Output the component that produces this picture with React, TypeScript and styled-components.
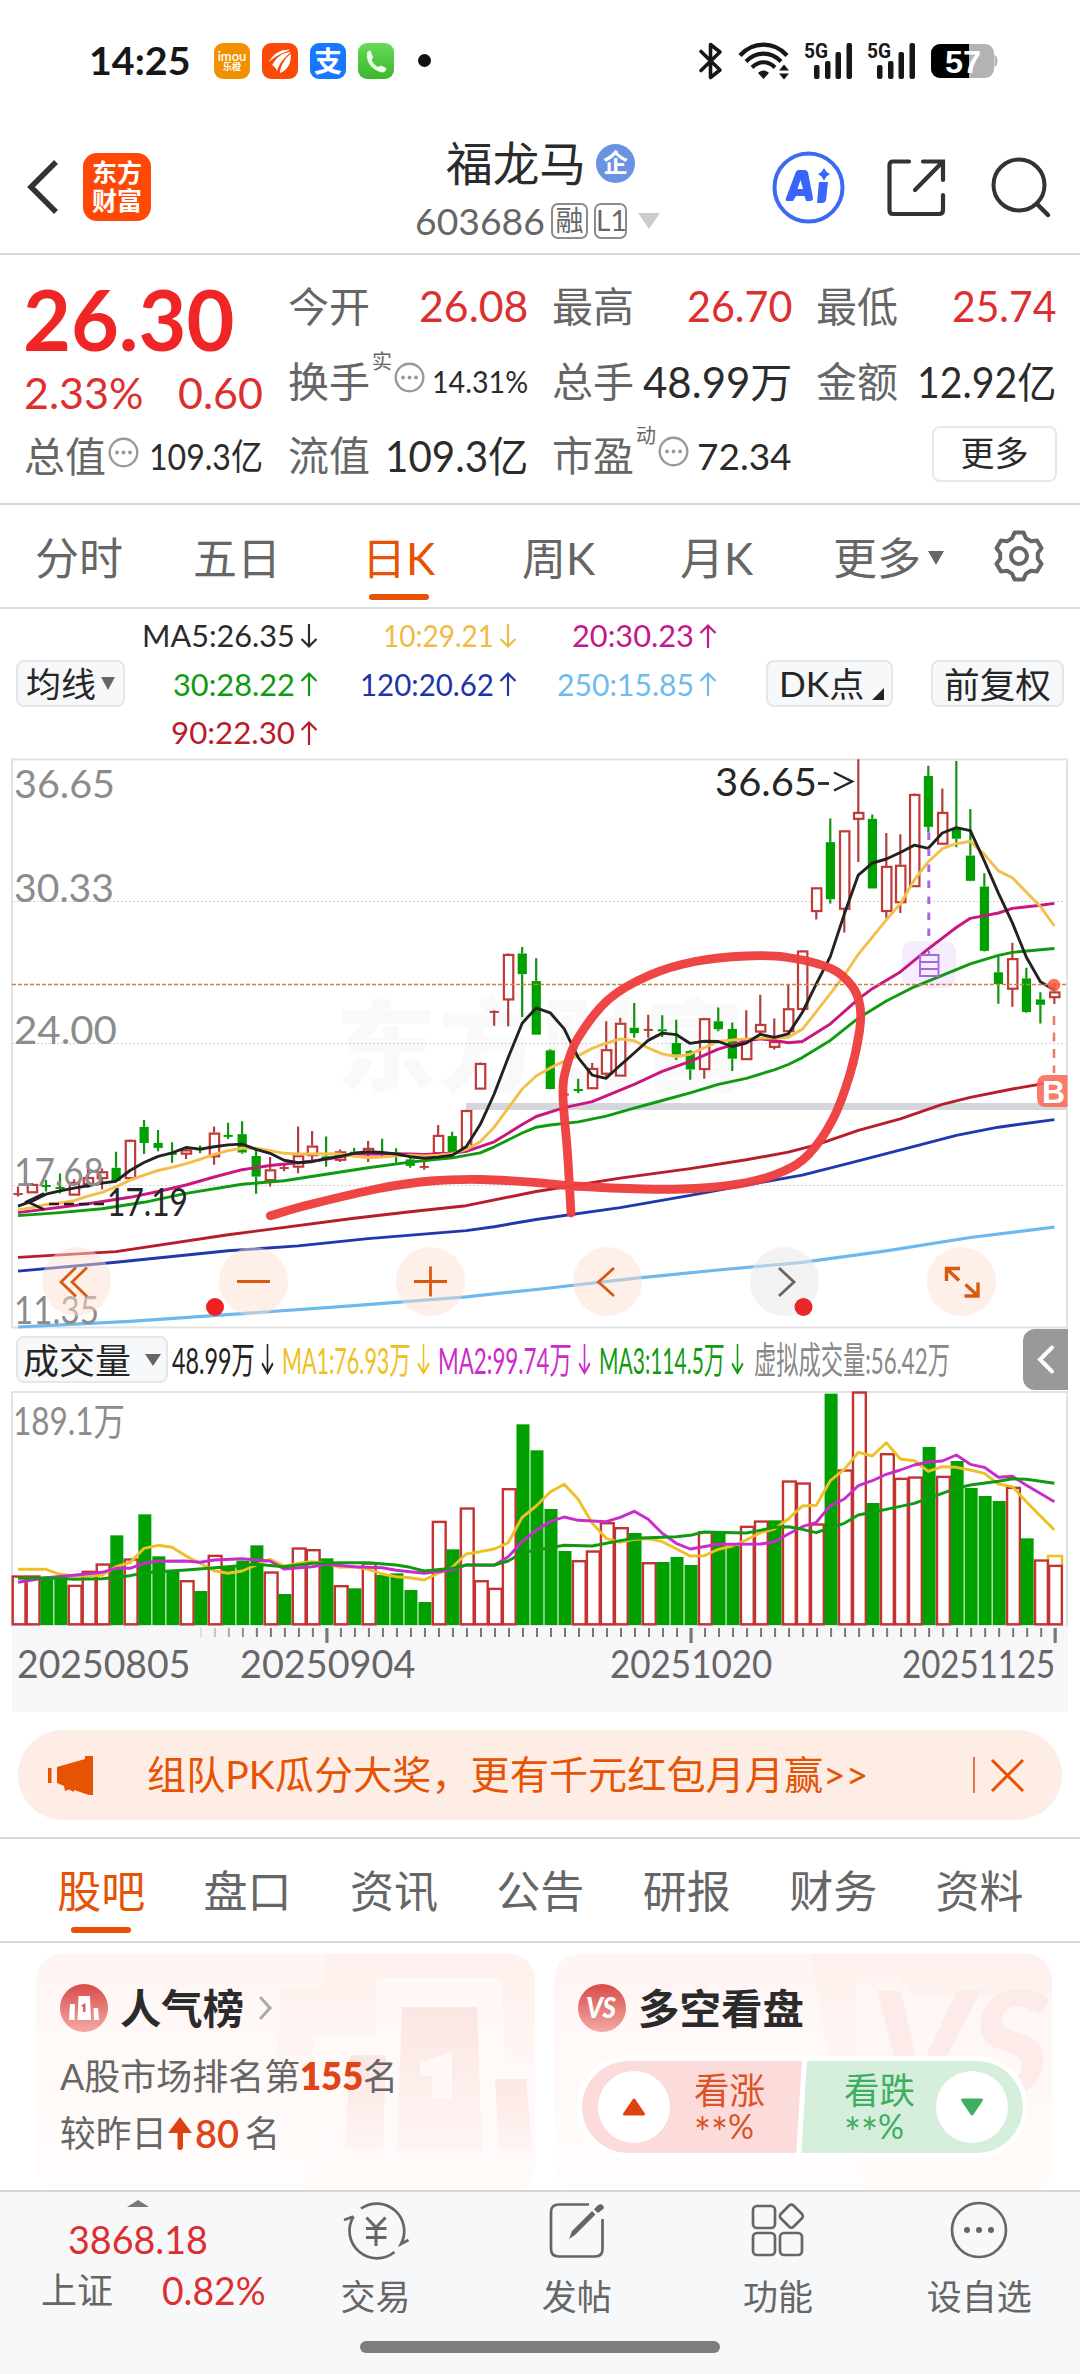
import React, { useLayoutEffect, useRef, useState } from 'react';
import styled, { createGlobalStyle } from 'styled-components';

const FONT = `Lato, "Noto Sans CJK SC", sans-serif`;
const ORANGE = '#e65305';
const RED = '#dc2f2f';
const GREEN = '#00a000';

const Global = createGlobalStyle`
  * { box-sizing: border-box; }
  body { margin: 0; background: #fff; font-family: ${FONT}; color: #2b2b2b; }
  svg { display: block; flex: none; overflow: visible; }
`;

/* ---------- text squeezed or stretched to an exact width ---------- */
const FitBox = styled.span<{ $w: number; $size: number; $color?: string; $weight?: number; $lh?: number }>`
  display: block;
  flex: none;
  width: ${p => p.$w}px;
  font-size: ${p => p.$size}px;
  line-height: ${p => p.$lh ?? Math.round(p.$size * 1.2)}px;
  font-weight: ${p => p.$weight ?? 400};
  color: ${p => p.$color ?? 'inherit'};
  white-space: nowrap;
`;
const FitInner = styled.span`
  display: inline-block;
  transform-origin: left center;
`;
type FitProps = { w: number; size: number; color?: string; weight?: number; lh?: number; children: React.ReactNode };
function Fit({ w, size, color, weight, lh, children }: FitProps) {
  const ref = useRef<HTMLSpanElement>(null);
  const [k, setK] = useState(1);
  useLayoutEffect(() => {
    if (ref.current) setK(w / ref.current.offsetWidth);
  }, [w, size]);
  return (
    <FitBox $w={w} $size={size} $color={color} $weight={weight} $lh={lh}>
      <FitInner ref={ref} style={{ transform: `scaleX(${k})` }}>{children}</FitInner>
    </FitBox>
  );
}

const Page = styled.div`
  width: 1080px;
  height: 2374px;
  display: flex;
  flex-direction: column;
  overflow: hidden;
  background: #fff;
`;

/* ---------- status bar ---------- */
const StatusBar = styled.div`
  height: 122px;
  flex: none;
  display: flex;
  align-items: center;
  padding: 0 82px 1px 89px;
`;
const AppBadges = styled.div`
  display: flex;
  align-items: center;
  gap: 12px;
  margin-left: 23px;
`;
const AppBadge = styled.div<{ $bg: string }>`
  width: 36px;
  height: 36px;
  border-radius: 9px;
  background: ${p => p.$bg};
  color: #fff;
  display: flex;
  flex-direction: column;
  align-items: center;
  justify-content: center;
  font-size: 28px;
  line-height: 30px;
  font-weight: 700;
`;
const BadgeLatin = styled.span`font-size: 13px; line-height: 12px; font-weight: 600;`;
const BadgeHan = styled.span`font-size: 9px; line-height: 10px;`;
const Dot = styled.span`
  width: 13px;
  height: 13px;
  border-radius: 50%;
  background: #111;
  margin-left: 24px;
`;
const StatusIcons = styled.div`
  margin-left: auto;
  display: flex;
  align-items: center;
`;

const Signal = () => (
  <svg width="50" height="40" viewBox="0 0 50 40" fill="#171717">
    <text x="-1" y="17" fontFamily="Roboto" fontWeight="700" fontSize="21" textLength="24" lengthAdjust="spacingAndGlyphs">5G</text>
    <rect x="9" y="24" width="5.500" height="14" rx="2" />
    <rect x="20" y="20" width="5.500" height="18" rx="2" />
    <rect x="30.500" y="11" width="5.500" height="27" rx="2" />
    <rect x="41.500" y="2" width="5.500" height="36" rx="2" />
  </svg>
);

function Status() {
  return (
    <StatusBar>
      <Fit w={102} size={39} weight={700} color="#171717">14:25</Fit>
      <AppBadges>
        <AppBadge $bg="#f29100"><BadgeLatin>imou</BadgeLatin><BadgeHan>乐橙</BadgeHan></AppBadge>
        <AppBadge $bg="#fc4a06">
          <svg width="36" height="36" viewBox="0 0 36 36" fill="#fff">
            <path d="M7 19C11 11 19 6 28 7C20 10 12 14 7 19Z" />
            <path d="M10 22C15 14 21 9 29 9C24 13 17 20 15 28C14 25 12 23 10 22Z" />
            <path d="M18 28C20 20 24 14 29 11C29 20 26 27 18 30Z" />
          </svg>
        </AppBadge>
        <AppBadge $bg="#1677ff">支</AppBadge>
        <AppBadge $bg="linear-gradient(#66d95a,#3db62c)">
          <svg width="36" height="36" viewBox="0 0 36 36">
            <path d="M9 9.500Q12 6 13 9L15 14Q15 15.500 13.500 16.500Q15 21 20 24L22.500 22.500Q28 24 28.500 26Q27 30.500 22 29Q11 25 9 15Z" fill="#eafbe6" />
          </svg>
        </AppBadge>
      </AppBadges>
      <Dot />
      <StatusIcons>
        <svg width="26" height="40" viewBox="0 0 26 40" fill="none" stroke="#171717" strokeWidth="3.600" strokeLinejoin="round" strokeLinecap="round">
          <path d="M3 10.500L22 29L12.500 36.500V3.500L22 11L3 29.500" />
        </svg>
        <svg width="56" height="40" viewBox="0 0 56 40" style={{ marginLeft: 15 }} fill="none" stroke="#171717" strokeWidth="4.200">
          <path d="M1 14.500C14 0 35 0 48 14.500" />
          <path d="M7 20.500C17 10 32 10 42 20.500" />
          <path d="M13 26.500C20 19.500 29 19.500 36 26.500" />
          <path d="M19 32C22 28.500 27 28.500 30 32L24.500 38Z" fill="#171717" stroke="none" />
          <path d="M40 29.500H50L45 23.500ZM40 32.500H50L45 38.500Z" fill="#171717" stroke="none" />
        </svg>
        <svg width="10" height="4" />
        <Signal />
        <svg width="13" height="4" />
        <Signal />
        <svg width="13" height="4" />
        <svg width="67" height="36" viewBox="0 0 67 36">
          <clipPath id="cell"><rect x="0" y="1" width="63" height="34" rx="9" /></clipPath>
          <g clipPath="url(#cell)">
            <rect width="63" height="36" fill="#b3b3b3" />
            <rect width="38" height="36" fill="#000" />
          </g>
          <path d="M63.500 12C67.500 13 67.500 23 63.500 24Z" fill="#b3b3b3" />
          <text x="14" y="30" fontFamily="Liberation Sans" fontWeight="700" fontSize="32" fill="#fff" textLength="36" lengthAdjust="spacingAndGlyphs">57</text>
        </svg>
      </StatusIcons>
    </StatusBar>
  );
}

/* ---------- header ---------- */
const Header = styled.header`
  height: 133px;
  flex: none;
  display: grid;
  grid-template-columns: 300px 1fr 350px;
  border-bottom: 2px solid #d9d9d9;
`;
const HeaderLeft = styled.div`
  display: flex;
  align-items: center;
  padding: 0 0 1px 26px;
  gap: 24px;
`;
const Logo = styled.div`
  width: 68px;
  height: 68px;
  border-radius: 14px;
  background: #ff4805;
  color: #fff;
  font-size: 25px;
  line-height: 28px;
  font-weight: 700;
  text-align: center;
  padding-top: 5px;
`;
const HeaderMid = styled.div`
  padding-left: 115px;
  display: flex;
  flex-direction: column;
`;
const NameRow = styled.div`
  display: flex;
  align-items: center;
  height: 56px;
  margin: 13px 0 0 31px;
  gap: 10px;
`;
const FirmBadge = styled.div`
  width: 39px;
  height: 39px;
  border-radius: 50%;
  background: #6b93e4;
  color: #fff;
  font-size: 25px;
  line-height: 36px;
  font-weight: 700;
  text-align: center;
`;
const CodeRow = styled.div`
  display: flex;
  align-items: center;
  height: 40px;
  margin-top: 10px;
  gap: 6px;
`;
const Tag = styled.span<{ $w: number }>`
  width: ${p => p.$w}px;
  height: 36px;
  border: 2px solid #8c8c8c;
  border-radius: 7px;
  color: #666;
  font-size: 28px;
  line-height: 31px;
  text-align: center;
`;
const HeaderRight = styled.div`
  display: flex;
  align-items: center;
  padding-left: 42px;
`;
const Triangle = styled.span<{ $w: number; $h: number; $color: string; $up?: boolean }>`
  flex: none;
  border-left: ${p => p.$w / 2}px solid transparent;
  border-right: ${p => p.$w / 2}px solid transparent;
  ${p => (p.$up ? 'border-bottom' : 'border-top')}: ${p => p.$h}px solid ${p => p.$color};
`;
const TagArrow = styled(Triangle)`margin-left: 5px;`;

function TopHeader() {
  return (
    <Header>
      <HeaderLeft>
        <svg width="33" height="56" viewBox="0 0 33 56" fill="none" stroke="#333" strokeWidth="5.500">
          <path d="M30 3L5 28L30 53" />
        </svg>
        <Logo>东方<br />财富</Logo>
      </HeaderLeft>
      <HeaderMid>
        <NameRow>
          <Fit w={140} size={47}>福龙马</Fit>
          <FirmBadge>企</FirmBadge>
        </NameRow>
        <CodeRow>
          <Fit w={130} size={37} color="#666">603686</Fit>
          <Tag $w={37}>融</Tag>
          <Tag $w={33}>L1</Tag>
          <TagArrow $w={23} $h={16} $color="#ccc" />
        </CodeRow>
      </HeaderMid>
      <HeaderRight>
        <svg width="73" height="73" viewBox="0 0 73 73">
          <circle cx="36.500" cy="36.500" r="34" fill="none" stroke="#3d6bf0" strokeWidth="4" />
          <g fill="#3865fb">
            <path d="M24 20.500Q25 19 27 19H33Q35.500 19 36 21.500L41 47Q41 50 38 50H34L32.500 45H24L21 50H15Q13 49.500 14 47ZM28.500 29L25.500 38H31Z" fillRule="evenodd" />
            <path d="M47 31H56L54 49Q53 52 50 52H45Z" />
            <path d="M52 17L54.500 21L58 23L54.500 25.500L52 29.500L49.500 25.500L46 23L49.500 21Z" />
          </g>
        </svg>
        <svg width="58" height="58" viewBox="0 0 58 58" style={{ marginLeft: 42 }} fill="none" stroke="#333" strokeWidth="4.200" strokeLinecap="round">
          <path d="M22 2.500H6Q2.500 2.500 2.500 6V51Q2.500 55 6 55H52Q56 55 56 51V36M36 2.500H56V21M55 3.500L28 31" />
        </svg>
        <svg width="60" height="60" viewBox="0 0 60 60" style={{ marginLeft: 46 }} fill="none" stroke="#333" strokeWidth="4" strokeLinecap="round">
          <circle cx="28" cy="27" r="25.500" />
          <path d="M46 46L57 57" strokeWidth="4.500" />
        </svg>
      </HeaderRight>
    </Header>
  );
}

/* ---------- quote ---------- */
const Quote = styled.section`
  height: 250px;
  flex: none;
  display: grid;
  grid-template-columns: 239px 767px;
  column-gap: 25px;
  padding-left: 24px;
  border-bottom: 2px solid #d9d9d9;
`;
const QuoteLeft = styled.div`
  padding-top: 31px;
  display: flex;
  flex-direction: column;
`;
const Line = styled.div<{ $h: number }>`
  height: ${p => p.$h}px;
  flex: none;
  display: flex;
  align-items: center;
  justify-content: space-between;
`;
const BigPrice = styled(Line)`
  margin: 0 0 1px -1px;
`;
const QuoteGrid = styled.div`
  display: grid;
  grid-template-columns: 240px 240px 240px;
  grid-template-rows: 72px 79px 69px;
  column-gap: 24px;
  padding-top: 15px;
`;
const Cell = styled.div`
  display: flex;
  align-items: center;
  justify-content: space-between;
`;
const LabelGroup = styled.div`
  display: flex;
  align-items: center;
  gap: 2px;
`;
const Sup = styled.span`
  font-size: 20px;
  line-height: 20px;
  color: #666;
  align-self: flex-start;
  margin-top: -6px;
`;
const MoreButton = styled.div`
  margin: 0 -1px 3px auto;
  width: 125px;
  height: 56px;
  border: 2px solid #e6e9ea;
  border-radius: 8px;
  display: flex;
  align-items: center;
  justify-content: center;
  font-size: 34px;
  line-height: 40px;
  padding-bottom: 3px;
`;

const Ellipsis = () => (
  <svg width="31" height="31" viewBox="0 0 31 31">
    <circle cx="15.500" cy="15.500" r="13.800" fill="none" stroke="#999" strokeWidth="2.400" />
    <g fill="#999"><circle cx="9" cy="15.500" r="1.900" /><circle cx="15.500" cy="15.500" r="1.900" /><circle cx="22" cy="15.500" r="1.900" /></g>
  </svg>
);
const EllipsisLift = styled.span`
  margin-top: -8px;
`;

const Label = ({ children }: { children: string }) => <Fit w={82} size={41} color="#666">{children}</Fit>;

function QuotePanel() {
  return (
    <Quote>
      <QuoteLeft>
        <BigPrice $h={64}><Fit w={211} size={85} weight={700} color="#f02525" lh={64}>26.30</Fit></BigPrice>
        <Line $h={84}>
          <Fit w={119} size={43} color={RED}>2.33%</Fit>
          <Fit w={85} size={43} color={RED}>0.60</Fit>
        </Line>
        <Line $h={42}>
          <LabelGroup><Label>总值</Label><EllipsisLift><Ellipsis /></EllipsisLift></LabelGroup>
          <Fit w={114} size={36}>109.3亿</Fit>
        </Line>
      </QuoteLeft>
      <QuoteGrid>
        <Cell><Label>今开</Label><Fit w={109} size={42} color={RED}>26.08</Fit></Cell>
        <Cell><Label>最高</Label><Fit w={105} size={42} color={RED}>26.70</Fit></Cell>
        <Cell><Label>最低</Label><Fit w={104} size={42} color={RED}>25.74</Fit></Cell>
        <Cell>
          <LabelGroup><Label>换手</Label><Sup>实</Sup><EllipsisLift><Ellipsis /></EllipsisLift></LabelGroup>
          <Fit w={96} size={31}>14.31%</Fit>
        </Cell>
        <Cell><Label>总手</Label><Fit w={149} size={42}>48.99万</Fit></Cell>
        <Cell><Label>金额</Label><Fit w={139} size={42}>12.92亿</Fit></Cell>
        <Cell><Label>流值</Label><Fit w={143} size={42}>109.3亿</Fit></Cell>
        <Cell>
          <LabelGroup><Label>市盈</Label><Sup>动</Sup><EllipsisLift><Ellipsis /></EllipsisLift></LabelGroup>
          <Fit w={95} size={37}>72.34</Fit>
        </Cell>
        <Cell><MoreButton>更多</MoreButton></Cell>
      </QuoteGrid>
    </Quote>
  );
}

/* ---------- period tabs ---------- */
const Periods = styled.nav`
  height: 104px;
  flex: none;
  display: grid;
  grid-template-columns: 158px 158px 165px 155px 161px 185px 98px;
  border-bottom: 2px solid #dcdcdc;
`;
const Tab = styled.div<{ $on?: boolean }>`
  display: flex;
  flex-direction: column;
  align-items: center;
  padding-top: 27px;
  font-size: 44px;
  line-height: 52px;
  color: ${p => (p.$on ? ORANGE : '#666')};
`;
const Underline = styled.span`
  width: 60px;
  height: 6px;
  border-radius: 3px;
  background: ${ORANGE};
  margin-top: 10px;
`;
const MoreTab = styled(Tab)`
  flex-direction: row;
  align-items: flex-start;
  padding-left: 36px;
  gap: 7px;
`;
const Nudge = styled.span<{ $y: number }>`
  display: flex;
  margin-top: ${p => p.$y}px;
`;
const GearTab = styled.div`
  padding: 25px 0 0 11px;
`;

function gearPath() {
  const pts: string[] = [];
  const teeth = 6;
  for (let i = 0; i < teeth; i++) {
    const a = (i / teeth) * Math.PI * 2 - Math.PI / 2;
    [[-0.37, 19], [-0.19, 23.8], [0.19, 23.8], [0.37, 19]].forEach(([d, r]) => {
      pts.push(`${(26 + Math.cos(a + d) * r).toFixed(1)} ${(26 + Math.sin(a + d) * r).toFixed(1)}`);
    });
  }
  return `M${pts.join('L')}Z`;
}

function PeriodTabs() {
  return (
    <Periods>
      <Tab>分时</Tab>
      <Tab>五日</Tab>
      <Tab $on>日K<Underline /></Tab>
      <Tab>周K</Tab>
      <Tab>月K</Tab>
      <MoreTab>更多<Nudge $y={19}><Triangle $w={16} $h={14} $color="#666" /></Nudge></MoreTab>
      <GearTab>
        <svg width="52" height="52" viewBox="0 0 52 52" fill="none" stroke="#666" strokeWidth="4" strokeLinejoin="round">
          <path d={gearPath()} />
          <circle cx="26" cy="26" r="8" />
        </svg>
      </GearTab>
    </Periods>
  );
}

/* ---------- indicators ---------- */
const Indicators = styled.section`
  height: 149px;
  flex: none;
  display: flex;
  align-items: center;
  padding: 0 16px;
`;
const Chip = styled.div<{ $w: number; $h?: number }>`
  flex: none;
  width: ${p => p.$w}px;
  height: ${p => p.$h ?? 47}px;
  border: 2px solid #e3e7eb;
  border-radius: 8px;
  background: #f7f8fa;
  display: flex;
  align-items: center;
  justify-content: center;
  gap: 5px;
  color: #262626;
`;
const CornerMark = styled.span`
  align-self: flex-end;
  margin: 0 -3px 5px 3px;
  border-bottom: 12px solid #222;
  border-left: 12px solid transparent;
`;
const MaGrid = styled.div`
  display: grid;
  grid-template-columns: 193px 199px 200px;
  grid-auto-rows: 48.500px;
  justify-items: end;
  align-items: center;
  width: 592px;
  margin: 1px 49px 0 0;
`;
const MaItem = styled.div<{ $color: string }>`
  color: ${p => p.$color};
  display: flex;
  align-items: center;
  gap: 5px;
`;
const Spacer = styled.div`flex: 1;`;

const Arrow = ({ color, up, w = 18, h = 24 }: { color: string; up?: boolean; w?: number; h?: number }) => (
  <svg width={w} height={h} viewBox="0 0 18 24" preserveAspectRatio="none" fill="none" stroke={color} strokeWidth="2.200">
    <path d={up ? 'M9 24V1.500M1.500 9L9 1.500L16.500 9' : 'M9 0V22.500M1.500 15L9 22.500L16.500 15'} />
  </svg>
);

const MAS: [string, number, string, boolean][] = [
  ['MA5:26.35', 153, '#2b2b2b', false],
  ['10:29.21', 111, '#efba45', false],
  ['20:30.23', 122, '#c5168c', true],
  ['30:28.22', 122, '#109a10', true],
  ['120:20.62', 134, '#2034a8', true],
  ['250:15.85', 137, '#6fbcec', true],
  ['90:22.30', 124, '#b81c28', true],
];

function IndicatorBar() {
  return (
    <Indicators>
      <Chip $w={109}><Fit w={70} size={34}>均线</Fit><Triangle $w={15} $h={13} $color="#666" /></Chip>
      <MaGrid>
        {MAS.map(([t, w, c, up]) => (
          <MaItem key={t} $color={c}><Fit w={w} size={31}>{t}</Fit><Arrow color={c} up={up} /></MaItem>
        ))}
      </MaGrid>
      <Chip $w={127}><Fit w={85} size={34}>DK点</Fit><CornerMark /></Chip>
      <Spacer />
      <Chip $w={133}><Fit w={107} size={35}>前复权</Fit></Chip>
    </Indicators>
  );
}

/* ---------- price chart ---------- */
const STEP = 14.005;
const cx = (i: number) => 18 + STEP * i;
const py = (v: number) => 740 + v / 2.6133;
const vy = (v: number) => 1310 + v / 3;

// direction, high, body top, body bottom, low
const CANDLES: [0 | 1, number, number, number, number][] = [
  [1,1167,1184,1187,1193],[1,1158,1160,1182,1184],[0,1150,1163,1167,1180],[0,1133,1168,1172,1185],[1,1148,1155,1188,1190],
  [1,1105,1142,1160,1170],[1,1120,1127,1145,1175],[0,1076,1118,1152,1155],[1,1044,1045,1145,1147],[0,993,1011,1053,1082],
  [0,1019,1053,1066,1075],[0,1051,1079,1083,1105],[1,1062,1070,1081,1095],[0,1060,1067,1071,1080],[1,1010,1026,1088,1110],
  [0,1000,1032,1036,1043],[0,996,1030,1078,1081],[0,1070,1087,1141,1186],[1,1090,1122,1150,1167],[1,1108,1116,1119,1127],
  [1,1010,1085,1115,1132],[1,1022,1060,1085,1098],[0,1036,1088,1092,1115],[1,1070,1075,1097,1103],[0,1066,1076,1080,1090],
  [1,1048,1066,1080,1103],[0,1042,1077,1081,1088],[0,1067,1078,1082,1105],[0,1092,1096,1113,1118],[1,1103,1113,1116,1123],
  [1,1006,1032,1080,1082],[0,1024,1035,1080,1082],[1,966,967,1065,1067],[1,843,844,911,912],[1,707,708,711,747],
  [1,558,559,678,748],[0,541,558,612,724],[0,570,630,770,770],[0,808,811,912,913],[1,918,924,927,930],
  [0,885,912,917,923],[1,844,857,910,910],[1,735,808,872,880],[1,726,739,877,877],[0,687,752,766,778],
  [1,718,755,758,778],[0,719,756,760,776],[0,731,792,822,836],[0,811,813,861,888],[1,726,727,860,885],
  [0,699,735,756,761],[0,738,755,833,865],[1,706,780,834,835],[1,666,742,762,768],[1,728,787,802,809],
  [1,638,701,761,763],[1,549,550,703,704],[1,384,385,447,469],[0,205,267,416,427],[1,235,236,441,503],
  [1,50,188,206,319],[0,195,206,388,388],[1,243,329,447,466],[1,246,326,424,452],[1,140,141,382,383],
  [0,67,94,227,242],[1,127,188,271,273],[0,55,230,258,280],[0,180,302,368,369],[0,348,383,551,553],
  [0,562,607,638,689],[1,530,570,650,697],[0,595,623,711,713],[0,659,678,692,741],[1,635,657,672,690],
];

const MA5 = [1218,1205,1187,1178,1171,1165,1158,1153,1125,1104,1088,1079,1065,1069,1063,1058,1056,1070,1080,1098,1105,1102,1094,1088,1080,1076,1078,1082,1089,1093,1090,1085,1063,1005,925,830,740,700,713,755,830,876,884,850,818,785,766,770,793,787,788,801,792,769,777,768,712,637,566,455,353,322,311,294,275,283,243,229,237,316,400,478,568,632,653];
const MA10 = [1228,1222,1214,1210,1204,1192,1182,1168,1150,1137,1125,1117,1107,1096,1083,1073,1067,1067,1073,1080,1082,1082,1081,1082,1088,1091,1090,1087,1085,1087,1085,1081,1070,1050,1012,962,912,878,857,840,825,806,792,781,786,805,820,827,821,804,788,784,781,779,779,777,756,710,663,615,560,515,470,428,366,318,284,271,265,299,342,360,398,435,486];

type Pt = [number, number];
const MA20: Pt[] = [[0,1235],[5,1212],[8,1195],[10,1180],[12,1163],[14,1142],[16,1123],[18,1112],[20,1105],[22,1096],[24,1083],[26,1081],[28,1082],[29,1083],[31,1080],[32,1075],[34,1050],[36,1005],[37,984],[39,961],[41,945],[44,900],[46,866],[48,840],[50,808],[52,786],[53,781],[54,785],[55,791],[56,788],[58,742],[60,677],[61,650],[63,606],[65,546],[67,490],[68,466],[70,452],[71,440],[73,432],[74,427]];
const MA30: Pt[] = [[0,1243],[3,1235],[6,1225],[9,1208],[12,1185],[16,1161],[19,1152],[22,1135],[25,1118],[28,1103],[31,1092],[33,1079],[34,1063],[36,1027],[37,1012],[38,1006],[40,998],[42,983],[44,962],[46,942],[48,922],[50,900],[52,884],[54,862],[55,848],[56,830],[58,785],[60,727],[62,682],[64,645],[66,615],[68,585],[70,563],[71,555],[73,548],[74,545]];
const MA90: Pt[] = [[0,1352],[7,1337],[15,1293],[24,1250],[28,1233],[32,1217],[37,1180],[43,1145],[48,1120],[52,1097],[55,1077],[57,1058],[60,1020],[63,990],[66,952],[68,934],[71,912],[74,893]];
const MA120: Pt[] = [[0,1388],[7,1365],[15,1335],[20,1322],[25,1303],[32,1282],[34,1272],[37,1253],[43,1222],[48,1190],[52,1163],[56,1137],[60,1100],[64,1062],[67,1033],[70,1012],[74,992]];
const MA250: Pt[] = [[0,1534],[8,1519],[16,1499],[24,1478],[32,1455],[37,1436],[44,1407],[50,1385],[56,1365],[62,1335],[68,1300],[74,1273]];

const dense = (a: number[]): Pt[] => a.map((v, i) => [i, v] as Pt);
const poly = (pts: Pt[], y: (v: number) => number) =>
  pts.map(([i, v]) => `${cx(i).toFixed(1)},${y(v).toFixed(1)}`).join(' ');

function smooth(p: Pt[]) {
  let d = `M${p[0][0]} ${p[0][1]}`;
  for (let i = 0; i < p.length - 1; i++) {
    const a = p[i - 1] ?? p[i], b = p[i], c = p[i + 1], e = p[i + 2] ?? c;
    d += `C${b[0] + (c[0] - a[0]) / 6} ${b[1] + (c[1] - a[1]) / 6} ${c[0] - (e[0] - b[0]) / 6} ${c[1] - (e[1] - b[1]) / 6} ${c[0]} ${c[1]}`;
  }
  return d;
}

const STROKE: Pt[] = [[270.3,1215.700],[310,1204.500],[378.800,1188.500],[430.500,1181],[482,1179.500],[540,1182.800],[574,1186],[643,1189],[695,1188.500],[747,1182.500],[784,1171],[809,1154],[833,1119],[850,1074],[859.500,1031],[860,1006],[852,986],[831,968.500],[788,957.500],[746.600,956],[695,961.500],[650,975],[609,999],[578,1038],[566,1069],[563,1096],[567.500,1153],[571,1213]];

const ChartWrap = styled.section`
  height: 570px;
  flex: none;
  position: relative;
  padding-left: 12px;
`;
const ZoomBar = styled.div`
  position: absolute;
  left: 42px;
  bottom: 12px;
  display: flex;
  gap: 108px;
`;
const RoundButton = styled.div<{ $muted?: boolean }>`
  width: 69px;
  height: 69px;
  border-radius: 50%;
  background: ${p => (p.$muted ? 'rgba(232,232,232,.55)' : 'rgba(253,224,210,.48)')};
  display: flex;
  align-items: center;
  justify-content: center;
`;

const GLYPHS = [
  'M34 20.500L19 35L34 49.500M45 20.500L30 35L45 49.500',
  'M18 34.500H51',
  'M18 34.500H51M34.500 19.500V49.500',
  'M41 21L25.500 35L41 49',
  'M29 21L44 35L29 49',
  'M19.500 34V21.500H33M20 22L32 33.500M51 35.500V49H37.500M50.500 48.500L38.500 37.500',
];

const AXIS: [string, number, number, number][] = [
  ['36.65', 14, 798, 101], ['30.33', 14, 901.5, 100], ['24.00', 14, 1044, 103], ['17.68', 14, 1186, 90], ['11.35', 14, 1324, 85],
];

function PriceChart() {
  return (
    <ChartWrap>
      <svg width="1056" height="570" viewBox="12 758 1056 570">
        <g fill="#f9f9f9" fontFamily="Noto Sans CJK SC" fontWeight="900" fontSize="100">
          <text x="336" y="1083" textLength="408">东方财富</text>
        </g>
        <path d="M12 1327.500V759.500H1067V1327.500Z" fill="none" stroke="#e2e2e2" strokeWidth="2" />
        <g stroke="#d4d4d4" strokeWidth="1" strokeDasharray="2 2">
          <path d="M13 901.500H1066M13 1043.500H1066M13 1185.500H1066" />
        </g>
        <path d="M466 1106.500H1067" stroke="#d3d7dc" strokeWidth="7" />
        <rect x="902" y="941" width="54" height="47" rx="11" fill="#f5edfe" />
        {CANDLES.map(([up, h, t, b, l], i) => {
          const x = cx(i);
          const flat = b - t < 6;
          const c = up ? '#c03a38' : GREEN;
          return (
            <g key={i}>
              <path d={`M${x} ${py(h)}V${py(t)}M${x} ${py(b)}V${py(l)}`} stroke={up ? '#b04040' : '#119311'} strokeWidth="2.200" />
              {up && !flat
                ? <rect x={x - 4.300} y={py(t) + 1} width="9.400" height={Math.max(py(b) - py(t) - 1, 2)} fill="#fff" stroke={c} strokeWidth="2.200" />
                : <rect x={x - 4.500} y={py(t)} width="9.200" height={Math.max(py(b) - py(t), 2)} fill={c} />}
            </g>
          );
        })}
        <g fill="none" strokeWidth="2.900" strokeLinejoin="round">
          <polyline points={poly(MA250, py)} stroke="#6db8ee" strokeWidth="3.200" />
          <polyline points={poly(MA120, py)} stroke="#2038ac" />
          <polyline points={poly(MA90, py)} stroke="#b71d2a" />
          <polyline points={poly(MA30, py)} stroke="#109a10" />
          <polyline points={poly(MA20, py)} stroke="#c9177f" />
          <polyline points={poly(dense(MA10), py)} stroke="#f3be4a" />
          <polyline points={poly(dense(MA5), py)} stroke="#222" />
        </g>
        <path d="M12 984.500H1066" stroke="#cc8140" strokeWidth="1.700" strokeDasharray="4 2" />
        <g fill="#8c8c8c" fontFamily="Lato" fontSize="39.500">
          {AXIS.map(([t, x, y, w]) => <text key={t} x={x} y={y} textLength={w} lengthAdjust="spacingAndGlyphs">{t}</text>)}
        </g>
        <g fill="#262626" fontFamily="Lato" fontSize="39">
          <text x="107" y="1215.500" textLength="81" lengthAdjust="spacingAndGlyphs">17.19</text>
          <text x="715" y="795.500" textLength="102" lengthAdjust="spacingAndGlyphs">36.65</text>
        </g>
        <path d="M818 783.500H829" stroke="#262626" strokeWidth="2.800" />
        <path d="M834 772.500L852 781.500L834 790.500" fill="none" stroke="#262626" strokeWidth="2.500" />
        <path d="M44 1193.500L27 1201.500L44 1209.500" fill="none" stroke="#222" strokeWidth="2.500" />
        <path d="M49 1204H105" stroke="#222" strokeWidth="2.500" strokeDasharray="10 5" />
        <path d="M928.800 832.500V940" stroke="#a566e8" strokeWidth="3" strokeDasharray="7.500 8.500" />
        <path d="M920 955H938.500V976H920ZM920 962H938.500M920 969H938.500M929 951V955" fill="none" stroke="#a566e8" strokeWidth="1.900" />
        <path d="M1054 1016V1073" stroke="#f07a68" strokeWidth="2.600" strokeDasharray="9 7.500" />
        <circle cx="1054" cy="985" r="6.300" fill="#fa5a42" opacity=".85" />
        <path d="M1046 1075H1067.500V1107H1046Q1037 1107 1037 1098V1084Q1037 1075 1046 1075Z" fill="#fb6a55" opacity=".88" />
        <text x="1042" y="1102.500" fontFamily="Liberation Sans" fontWeight="700" fontSize="32" fill="#fff">B</text>
        <path d={smooth(STROKE)} fill="none" stroke="#ed3f3f" strokeWidth="8.800" strokeLinecap="round" strokeLinejoin="round" opacity=".97" />
        <circle cx="215" cy="1307" r="9" fill="#ee2222" />
      </svg>
      <ZoomBar>
        {GLYPHS.map((d, i) => (
          <RoundButton key={i} $muted={i === 4}>
            <svg width="69" height="69" viewBox="0 0 69 69" fill="none" stroke={i === 4 ? '#666' : '#d85a12'} strokeWidth={i === 5 ? 3.4 : 2.8}>
              <path d={d} />
              {i === 4 && <circle cx="53.500" cy="60" r="9" fill="#e92727" stroke="none" />}
            </svg>
          </RoundButton>
        ))}
      </ZoomBar>
    </ChartWrap>
  );
}

/* ---------- volume ---------- */
const VolumeHead = styled.div`
  height: 63px;
  flex: none;
  display: flex;
  align-items: center;
  padding: 0 12px 0 16px;
`;
const VolLegend = styled.div<{ $color: string; $gap: number }>`
  display: flex;
  align-items: center;
  color: ${p => p.$color};
  margin-left: ${p => p.$gap}px;
  gap: 6px;
`;
const Drawer = styled.div`
  width: 45px;
  height: 61px;
  border-radius: 12px 0 0 12px;
  background: #999;
  margin-left: auto;
  display: flex;
  align-items: center;
  justify-content: center;
`;

const BARS: [0 | 1, number][] = [
  [1,796],[1,796],[0,800],[0,800],[1,824],[1,782],[1,760],[0,676],[1,745],[0,613],[0,739],[0,785],[1,810],[0,843],[1,734],
  [0,770],[0,752],[0,706],[1,784],[0,852],[1,712],[1,717],[0,745],[1,825],[0,835],[1,757],[0,795],[0,790],[0,840],[0,876],
  [1,632],[0,718],[1,592],[1,810],[1,833],[1,534],[0,343],[0,421],[0,597],[0,723],[1,750],[1,721],[1,636],[1,651],[0,669],
  [1,756],[0,756],[0,741],[0,765],[1,663],[0,668],[0,708],[1,647],[1,631],[0,631],[1,511],[1,517],[1,640],[0,251],[1,478],
  [1,244],[0,579],[1,429],[1,503],[1,499],[0,411],[1,497],[0,453],[0,534],[0,558],[0,573],[1,530],[0,685],[1,748],[1,764],
];
const VMA1: Pt[] = [[0,778],[2,778],[3,793],[4,798],[5,798],[6,796],[7,770],[8,758],[9,715],[10,706],[11,712],[12,738],[13,760],[14,782],[15,790],[16,783],[17,765],[18,748],[19,768],[20,760],[21,755],[22,760],[23,772],[24,770],[25,778],[26,792],[27,800],[28,803],[29,810],[30,790],[31,772],[32,732],[33,725],[34,717],[35,698],[36,622],[37,588],[38,546],[39,523],[40,568],[41,640],[42,685],[43,697],[44,688],[45,686],[46,695],[47,716],[48,738],[49,737],[50,718],[51,708],[52,690],[53,668],[54,657],[55,627],[56,588],[57,586],[58,512],[59,478],[60,427],[61,438],[62,398],[63,447],[64,452],[65,484],[66,470],[67,472],[68,480],[69,490],[70,522],[71,530],[72,575],[73,618],[74,660]];
const VMA2: Pt[] = [[0,817],[2,803],[4,796],[6,787],[7,775],[8,775],[9,760],[10,754],[12,753],[13,757],[14,750],[16,746],[18,753],[19,777],[21,770],[22,763],[24,770],[26,773],[27,781],[29,790],[31,780],[32,765],[34,766],[35,740],[36,695],[37,661],[38,635],[39,621],[40,631],[42,635],[43,622],[44,604],[45,628],[46,670],[47,700],[48,717],[50,703],[53,702],[54,696],[55,672],[56,650],[57,637],[58,587],[59,567],[60,527],[61,512],[62,493],[63,480],[64,465],[65,456],[66,453],[67,435],[68,463],[69,472],[70,502],[71,499],[72,526],[74,575]];
const VMA3: Pt[] = [[0,805],[3,805],[4,808],[6,806],[8,797],[9,789],[10,785],[12,780],[15,770],[17,763],[19,770],[21,760],[23,758],[25,758],[27,765],[28,772],[29,783],[31,775],[32,765],[34,765],[35,753],[36,728],[37,720],[39,706],[41,708],[43,692],[44,685],[47,680],[48,676],[49,666],[52,669],[53,661],[54,652],[55,650],[56,658],[57,668],[58,653],[59,640],[60,615],[62,598],[64,580],[65,565],[67,535],[68,525],[70,514],[71,506],[72,508],[74,520]];

const VolumeWrap = styled.div`
  height: 235px;
  flex: none;
  padding-left: 12px;
`;
const DateAxis = styled.div`
  height: 86px;
  flex: none;
  margin: 0 12px;
  background: #f7f7fa;
`;
const Dates = styled.div`
  display: flex;
  align-items: center;
  height: 34px;
  padding-left: 5px;
  margin-top: 2px;
`;
const Gap = styled.span<{ $w: number }>`flex: none; width: ${p => p.$w}px;`;

function Volume() {
  return (
    <>
      <VolumeHead>
        <Chip $w={152} $h={47}><Fit w={108} size={35}>成交量</Fit><Gap $w={4} /><Triangle $w={16} $h={12} $color="#666" /></Chip>
        <VolLegend $color="#222" $gap={4}><Fit w={83} size={37} lh={34}>48.99万</Fit><Arrow color="#222" w={13} h={31} /></VolLegend>
        <VolLegend $color="#edc024" $gap={8}><Fit w={129} size={37} lh={34}>MA1:76.93万</Fit><Arrow color="#edc024" w={13} h={31} /></VolLegend>
        <VolLegend $color="#cb2bcb" $gap={8}><Fit w={134} size={37} lh={34}>MA2:99.74万</Fit><Arrow color="#cb2bcb" w={13} h={31} /></VolLegend>
        <VolLegend $color="#109a10" $gap={8}><Fit w={126} size={37} lh={34}>MA3:114.5万</Fit><Arrow color="#109a10" w={13} h={31} /></VolLegend>
        <VolLegend $color="#888" $gap={10}><Fit w={196} size={37} lh={34}>虚拟成交量:56.42万</Fit></VolLegend>
        <Drawer>
          <svg width="18" height="29" viewBox="0 0 18 29" fill="none" stroke="#fff" strokeWidth="4" strokeLinecap="round"><path d="M15 2.500L3 14.500L15 26.500" /></svg>
        </Drawer>
      </VolumeHead>
      <VolumeWrap>
        <svg width="1056" height="235" viewBox="12 1391 1056 235">
          <path d="M12 1626V1392H1067V1626Z" fill="none" stroke="#e2e2e2" strokeWidth="2" />
          <text x="13" y="1435" fontFamily="Lato, Noto Sans CJK SC" fontSize="38" fill="#8c8c8c" textLength="112" lengthAdjust="spacingAndGlyphs">189.1万</text>
          <path d="M1048 1625V1556H1062V1566" fill="none" stroke="#edc024" strokeWidth="2.500" />
          {BARS.map(([up, t], i) => up
            ? <rect key={i} x={cx(i) + 0.7 - 6} y={vy(t) + 1.2} width="12.800" height={1624.3 - vy(t) - 1.2} fill="#fff" stroke="#c23432" strokeWidth="2.400" />
            : <rect key={i} x={cx(i) + 0.7 - 6.4} y={vy(t)} width="13" height={1625 - vy(t)} fill={GREEN} />)}
          <g fill="none" strokeWidth="2.900" strokeLinejoin="round">
            <polyline points={poly(VMA1, vy)} stroke="#edc024" />
            <polyline points={poly(VMA2, vy)} stroke="#cb2bcb" />
            <polyline points={poly(VMA3, vy)} stroke="#109a10" />
          </g>
        </svg>
      </VolumeWrap>
      <DateAxis>
        <svg width="1056" height="18" viewBox="12 1626 1056 18">
          {Array.from({ length: 62 }, (_, k) => k + 13).map(i => {
            const major = i === 22 || i === 48 || i === 74;
            return <path key={i} d={`M${cx(i) + 0.8} 1628V${major ? 1643 : 1637}`} stroke="#777" strokeWidth={major ? 3.2 : 2} opacity={Math.min(1, (i - 12) / 5)} />;
          })}
        </svg>
        <Dates>
          <Fit w={173} size={38} color="#666" lh={38}>20250805</Fit><Gap $w={50} />
          <Fit w={175} size={38} color="#666" lh={38}>20250904</Fit><Gap $w={195} />
          <Fit w={162} size={38} color="#666" lh={38}>20251020</Fit><Gap $w={130} />
          <Fit w={153} size={38} color="#666" lh={38}>20251125</Fit>
        </Dates>
      </DateAxis>
    </>
  );
}

/* ---------- promo banner ---------- */
const Banner = styled.section`
  height: 90px;
  flex: none;
  margin: 18px 18px 17px;
  border-radius: 45px;
  background: #fdede4;
  color: ${ORANGE};
  display: flex;
  align-items: center;
  padding: 0 38px 0 29px;
`;
const BannerText = styled.div`margin: 0 0 2px 54px;`;
const Divider = styled.span`
  width: 2px;
  height: 36px;
  background: #dd7a43;
  margin: 0 16px 0 auto;
`;

/* ---------- section tabs ---------- */
const Sections = styled.nav`
  height: 106px;
  flex: none;
  border-top: 2px solid #d9d9d9;
  border-bottom: 2px solid #d9d9d9;
  display: grid;
  grid-template-columns: repeat(7, 146.400px);
  padding-left: 28px;
`;
const SectionTab = styled(Tab)`padding-top: 26px;`;
const SectionLine = styled(Underline)`margin-top: 10px;`;

/* ---------- cards ---------- */
const Cards = styled.section`
  height: 247px;
  flex: none;
  padding: 11px 28px 0 36px;
  display: grid;
  grid-template-columns: 499px 498px;
  gap: 19px;
  overflow: hidden;
`;
const Card = styled.article`
  position: relative;
  height: 238px;
  border-radius: 26px;
  overflow: hidden;
  background: linear-gradient(#fff5f3, #fff9f7 40%, #fffdfc);
  padding: 30px 0 0 24px;
`;
const CardArt = styled.svg`
  position: absolute;
  left: 0;
  top: 0;
`;
const CardBody = styled.div`
  position: relative;
  display: flex;
  flex-direction: column;
`;
const CardTitle = styled.div`
  display: flex;
  align-items: center;
  height: 48px;
  gap: 12px;
  color: #2b2b2b;
`;
const RankLine = styled.div<{ $top: number }>`
  display: flex;
  align-items: center;
  height: 44px;
  margin-top: ${p => p.$top}px;
  color: #666;
`;
const Pill = styled.div`
  width: 451px;
  height: 102px;
  border: 5px solid #fff;
  border-radius: 51px;
  margin: 24px 0 0 -1px;
  display: flex;
  align-items: center;
  justify-content: space-between;
  padding: 0 15px 0 16px;
  background: linear-gradient(93.500deg, #fcdcda 0 219px, #fff 220px 224px, #d6eedc 225px) padding-box, #fff;
`;
const Side = styled.div<{ $color: string }>`
  display: flex;
  align-items: center;
  gap: 24px;
  color: ${p => p.$color};
`;
const Disc = styled.span`
  width: 72px;
  height: 72px;
  border-radius: 50%;
  background: #fff;
  display: flex;
  align-items: center;
  justify-content: center;
`;
const SideText = styled.div<{ $gap?: number }>`
  display: flex;
  flex-direction: column;
  margin: -1px ${p => p.$gap ?? 0}px 0 0;
`;
const Stars = styled.span`
  font-size: 42px;
  line-height: 20px;
  vertical-align: -9px;
`;

function InfoCards() {
  return (
    <Cards>
      <Card>
        <CardArt width="499" height="238" viewBox="0 0 499 238">
          <defs>
            <linearGradient id="bar" x1="0" y1="0" x2="0" y2="1"><stop offset="0" stopColor="#fbe6e3" /><stop offset="1" stopColor="#fef5f3" /></linearGradient>
            <linearGradient id="halo" x1="0" y1="0" x2="0" y2="1"><stop offset="0" stopColor="#fef0ed" /><stop offset="1" stopColor="#fffaf8" stopOpacity="0" /></linearGradient>
          </defs>
          <path d="M290 0H499V238H240L243 32H288Z" fill="url(#halo)" />
          <path d="M341 24H465L470 110H499V238H272L278 82H338Z" fill="#fffaf8" opacity=".75" />
          <g fill="url(#bar)">
            <path d="M366 53H441L446 196H361Z" />
            <path d="M314 101H350L347 196H309Z" />
            <path d="M459 125H490L496 196H463Z" />
          </g>
          <path d="M384 108L416 98V145H396V122H384Z" fill="#fff8f6" />
        </CardArt>
        <CardBody>
          <CardTitle>
            <svg width="48" height="48" viewBox="0 0 48 48">
              <defs><linearGradient id="ic" x1="0" y1="0" x2="0" y2="1"><stop offset="0" stopColor="#d84c4a" /><stop offset="1" stopColor="#f3aaa6" /></linearGradient></defs>
              <circle cx="24" cy="24" r="24" fill="url(#ic)" />
              <path d="M10 20H15L14.500 36H9ZM18.500 12H30L31 36H17.500ZM33.500 24H38L39 36H34Z" fill="#fff" />
              <path d="M21.500 21L25.500 19V28H23V22.500H21.500Z" fill="#dd6663" />
            </svg>
            <Fit w={124} size={41} weight={600}>人气榜</Fit>
            <svg width="17" height="24" viewBox="0 0 17 24" fill="none" stroke="#aaa" strokeWidth="3" strokeLinecap="round"><path d="M5 2L14 12L5 22" /></svg>
          </CardTitle>
          <RankLine $top={22}>
            <Fit w={240} size={36}>A股市场排名第</Fit>
            <Fit w={63} size={37} weight={800} color="#de4518">155</Fit>
            <Fit w={35} size={36}>名</Fit>
          </RankLine>
          <RankLine $top={13}>
            <Fit w={107} size={36}>较昨日</Fit>
            <svg width="26" height="36" viewBox="0 0 26 36" fill="#e04113"><path d="M13 2L25 18H16V32Q16 35 13 35T10.500 32V18H1Z" /></svg>
            <Gap $w={2} /><Fit w={44} size={38} weight={600} color="#de4518">80</Fit><Gap $w={6} />
            <Fit w={35} size={36}>名</Fit>
          </RankLine>
        </CardBody>
      </Card>
      <Card>
        <CardArt width="498" height="238" viewBox="0 0 498 238">
          <path d="M256 0H498V238H300Z" fill="url(#halo)" />
          <path d="M302 22H345L357 42H498V238H310Z" fill="#fff8f6" opacity=".7" />
          <text x="316" y="143" fontFamily="Lato" fontStyle="italic" fontWeight="900" fontSize="146" fill="#fbe5e2" opacity=".65" textLength="180" lengthAdjust="spacingAndGlyphs">VS</text>
        </CardArt>
        <CardBody>
          <CardTitle>
            <svg width="48" height="48" viewBox="0 0 48 48">
              <circle cx="24" cy="24" r="24" fill="url(#ic)" />
              <text x="8" y="34" fontFamily="Lato" fontStyle="italic" fontWeight="900" fontSize="28" fill="#fff" textLength="30" lengthAdjust="spacingAndGlyphs">VS</text>
            </svg>
            <Fit w={166} size={41} weight={600}>多空看盘</Fit>
          </CardTitle>
          <Pill>
            <Side $color="#dc5228">
              <Disc><svg width="24" height="20" viewBox="0 0 24 20" fill="#e04113" stroke="#e04113" strokeWidth="3" strokeLinejoin="round"><path d="M12 3L21.500 17H2.500Z" /></svg></Disc>
              <SideText><Fit w={71} size={36} lh={38}>看涨</Fit><Fit w={60} size={34} lh={34}><Stars>**</Stars>%</Fit></SideText>
            </Side>
            <Side $color="#3fae63">
              <SideText $gap={-3}><Fit w={71} size={36} lh={38}>看跌</Fit><Fit w={60} size={34} lh={34}><Stars>**</Stars>%</Fit></SideText>
              <Disc><svg width="24" height="20" viewBox="0 0 24 20" fill="#3fae63" stroke="#3fae63" strokeWidth="3" strokeLinejoin="round"><path d="M12 17L21.500 3H2.500Z" /></svg></Disc>
            </Side>
          </Pill>
        </CardBody>
      </Card>
    </Cards>
  );
}

/* ---------- bottom bar ---------- */
const Bottom = styled.footer`
  height: 184px;
  flex: none;
  border-top: 2px solid #d6d6d9;
  background: #f7f8fa;
  display: flex;
  flex-direction: column;
  align-items: center;
`;
const BottomRow = styled.div`
  width: 1080px;
  height: 149px;
  display: grid;
  grid-template-columns: 275px repeat(4, 201.250px);
`;
const IndexBox = styled.div`
  display: flex;
  flex-direction: column;
  align-items: center;
  padding: 8px 0 0 0;
`;
const IndexRow = styled.div`
  width: 275px;
  padding: 0 9px 0 41px;
  display: flex;
  align-items: center;
  justify-content: space-between;
  margin-top: 4px;
`;
const IndexValue = styled.div`margin-top: 9px;`;
const NavItem = styled.div`
  display: flex;
  flex-direction: column;
  align-items: center;
  padding-top: 9px;
  font-size: 35px;
  line-height: 42px;
  color: #666;
  svg { margin-bottom: 16px; }
`;
const HomeBar = styled.div`
  width: 360px;
  height: 12px;
  border-radius: 6px;
  background: #7c7d7f;
`;

function BottomBar() {
  return (
    <Bottom>
      <BottomRow>
        <IndexBox>
          <Triangle $w={22} $h={7} $color="#777" $up />
          <IndexValue><Fit w={140} size={39} color={RED}>3868.18</Fit></IndexValue>
          <IndexRow><Fit w={72} size={36} color="#666">上证</Fit><Fit w={104} size={38} color={RED}>0.82%</Fit></IndexRow>
        </IndexBox>
        <NavItem>
          <svg width="66" height="58" viewBox="0 0 66 58" fill="none" stroke="#666" strokeWidth="2.700">
            <path d="M18 7.500A27.500 27.500 0 0 1 58 43L65.500 39M10.500 15.500L1 19M10.500 15.500A27.500 27.500 0 0 0 51.500 51" />
            <path d="M23.500 16.500L33 26.500L42.500 16.500M23 27.500H43.500M23 36.500H43.500M33 26.500V45" strokeWidth="3" />
          </svg>
          交易
        </NavItem>
        <NavItem>
          <svg width="56" height="58" viewBox="0 0 56 58" fill="none" stroke="#666" strokeWidth="2.700">
            <path d="M40 3.500H10Q2 3.500 2 11V48Q2 55.500 10 55.500H46Q53.500 55.500 53.500 48V18" />
            <path d="M20 38L23 30L43 10L46.500 13.500L26 34Z" fill="#666" stroke="none" />
            <path d="M45 8.500L48.500 4.500Q52 2 54 4.500T53.500 8.500L49 12Z" fill="#666" stroke="none" />
          </svg>
          发帖
        </NavItem>
        <NavItem>
          <svg width="54" height="58" viewBox="0 0 54 58" fill="none" stroke="#666" strokeWidth="2.700">
            <rect x="2" y="5" width="22" height="22" rx="4" />
            <rect x="2" y="32" width="22" height="22" rx="4" />
            <rect x="29" y="32" width="22" height="22" rx="4" />
            <rect x="31" y="6" width="18" height="18" rx="3" transform="rotate(45 40 15.500)" />
          </svg>
          功能
        </NavItem>
        <NavItem>
          <svg width="58" height="58" viewBox="0 0 58 58">
            <circle cx="29" cy="29" r="27" fill="none" stroke="#666" strokeWidth="2.700" />
            <g fill="#666"><circle cx="17" cy="29" r="3" /><circle cx="29" cy="29" r="3" /><circle cx="41" cy="29" r="3" /></g>
          </svg>
          设自选
        </NavItem>
      </BottomRow>
      <HomeBar />
    </Bottom>
  );
}

export default function App() {
  return (
    <>
      <Global />
      <Page>
        <Status />
        <TopHeader />
        <QuotePanel />
        <PeriodTabs />
        <IndicatorBar />
        <PriceChart />
        <Volume />
        <Banner>
          <svg width="46" height="40" viewBox="0 0 46 40" fill={ORANGE}>
            <path d="M1 13H4.500V28H1ZM10 12L38 4V1H46V40H42L27 35V37L22 34.500L18 36L17 31L10 28Z" />
          </svg>
          <BannerText><Fit w={722} size={39}>组队PK瓜分大奖，更有千元红包月月赢&gt;&gt;</Fit></BannerText>
          <Divider />
          <svg width="33" height="33" viewBox="0 0 33 33" fill="none" stroke={ORANGE} strokeWidth="3"><path d="M1 1L32 32M32 1L1 32" /></svg>
        </Banner>
        <Sections>
          {['股吧', '盘口', '资讯', '公告', '研报', '财务', '资料'].map((t, i) => (
            <SectionTab key={t} $on={i === 0}>{t}{i === 0 && <SectionLine />}</SectionTab>
          ))}
        </Sections>
        <InfoCards />
        <BottomBar />
      </Page>
    </>
  );
}
